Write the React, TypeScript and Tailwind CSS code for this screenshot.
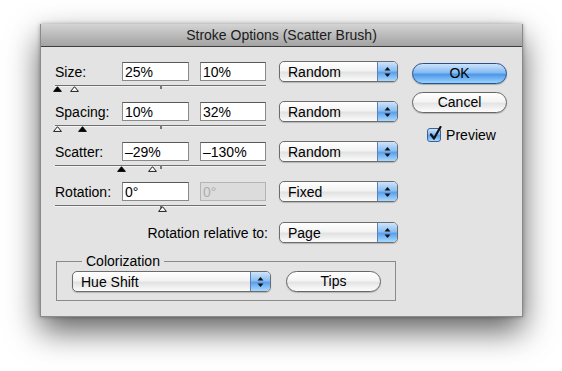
import React from "react";

const FONT = { fontFamily: '"Liberation Sans", Arial, sans-serif' };

function Arrows() {
  return (
    <svg width="7" height="12" viewBox="0 0 7 12">
      <path d="M3.5 1 L6.5 4.5 L0.5 4.5 Z" fill="#111" />
      <path d="M3.5 11 L6.5 7.5 L0.5 7.5 Z" fill="#111" />
    </svg>
  );
}

function PopUp({ label, wide }: { label: string; wide?: boolean }) {
  return (
    <div
      className={`flex h-[21px] shrink-0 overflow-hidden rounded-[5px] border border-[#6c6c6c] bg-[linear-gradient(to_bottom,#ffffff_0%,#f3f3f3_45%,#e2e2e2_55%,#fbfbfb_100%)] shadow-[0_1px_1px_rgba(0,0,0,0.2)] ${
        wide ? "w-[199px]" : "w-[119px]"
      }`}
    >
      <div className="flex flex-1 items-center pl-[8px] text-[14px] leading-none text-black">{label}</div>
      <div className="flex w-[20px] items-center justify-center border-l border-[#5d7fb3] bg-[linear-gradient(to_bottom,#cfe4fb_0%,#8cbff3_45%,#5aa0ec_55%,#a8dafe_100%)]">
        <Arrows />
      </div>
    </div>
  );
}

function Field({ value, w, disabled }: { value: string; w: string; disabled?: boolean }) {
  return (
    <div
      className={`flex h-[19px] shrink-0 items-center border pl-[2px] text-[14px] leading-none ${w} ${
        disabled
          ? "border-[#b4b4b4] bg-[#dcdcdc] text-[#b0b0b0]"
          : "border-[#8a8a8a] border-t-[#5a5a5a] bg-white text-black"
      }`}
    >
      {value}
    </div>
  );
}

function Thumb({ at, filled }: { at: number; filled: boolean }) {
  return (
    <svg
      className="absolute top-[1px]"
      style={{ left: at - 4.5 }}
      width="9"
      height="6"
      viewBox="0 0 9 6"
    >
      <path
        d="M4.5 0.7 L8.4 5.4 L0.6 5.4 Z"
        fill={filled ? "#000" : "#fff"}
        stroke="#000"
        strokeWidth="0.9"
      />
    </svg>
  );
}

function Slider({ thumbs }: { thumbs: { at: number; filled: boolean }[] }) {
  return (
    <div className="relative mt-[4px] h-[8px] w-[211px]">
      <div className="h-px w-full bg-[#6f6f6f]" />
      <div className="h-px w-full bg-[#f4f4f4]" />
      <div className="absolute left-[105px] top-0 h-[4px] w-[2px] bg-[#777]" />
      {thumbs.map((t, i) => (
        <Thumb key={i} at={t.at} filled={t.filled} />
      ))}
    </div>
  );
}

function Row({
  label,
  a,
  b,
  disabledB,
  pop,
  thumbs,
}: {
  label: string;
  a: string;
  b: string;
  disabledB?: boolean;
  pop: string;
  thumbs: { at: number; filled: boolean }[];
}) {
  return (
    <div className="flex h-[40px] items-start gap-[13px]">
      <div className="flex w-[211px] flex-col">
        <div className="flex h-[19px] items-center">
          <div className="w-[67px] text-[14px] leading-none text-black">{label}</div>
          <Field value={a} w="w-[67px]" />
          <div className="w-[11px]" />
          <Field value={b} w="w-[66px]" disabled={disabledB} />
        </div>
        <Slider thumbs={thumbs} />
      </div>
      <div className="-mt-px">
        <PopUp label={pop} />
      </div>
    </div>
  );
}

export default function App() {
  return (
    <div className="h-[371px] w-[562px] overflow-hidden bg-white pl-[40px] pt-[24px]" style={FONT}>
      <div className="w-[483px] border-x border-b border-[#8a8a8a] bg-[#e3e3e3] shadow-[0_14px_30px_rgba(0,0,0,0.62),0_0_4px_rgba(0,0,0,0.3)]">
        <div className="flex h-[23px] items-center justify-center border-b border-[#3e3e3e] bg-[linear-gradient(to_bottom,#d4d4d4_0%,#bbbbbb_50%,#a3a3a3_100%)] text-[14px] text-[#1b1b1b]">
          Stroke Options (Scatter Brush)
        </div>
        <div className="flex pb-[15px] pl-[14px] pr-[15px] pt-[15px]">
          <div className="flex w-[343px] flex-col">
            <Row
              label="Size:"
              a="25%"
              b="10%"
              pop="Random"
              thumbs={[
                { at: 2.5, filled: true },
                { at: 19.5, filled: false },
              ]}
            />
            <Row
              label="Spacing:"
              a="10%"
              b="32%"
              pop="Random"
              thumbs={[
                { at: 2, filled: false },
                { at: 27.5, filled: true },
              ]}
            />
            <Row
              label="Scatter:"
              a="–29%"
              b="–130%"
              pop="Random"
              thumbs={[
                { at: 66, filled: true },
                { at: 97.5, filled: false },
              ]}
            />
            <Row
              label="Rotation:"
              a="0°"
              b="0°"
              disabledB
              pop="Fixed"
              thumbs={[{ at: 107, filled: false }]}
            />
            <div className="flex h-[21px] items-center">
              <div className="flex-1 pr-[11px] text-right text-[14px] leading-none text-black">
                Rotation relative to:
              </div>
              <PopUp label="Page" />
            </div>
            <fieldset className="ml-px mt-[10px] w-[340px] border border-[#8a8a8a] pb-[8px] pl-[15px] pr-[14px] pt-[2px]">
              <legend className="ml-[10px] px-[4px] text-[14px] leading-[16px] text-black">Colorization</legend>
              <div className="flex items-center gap-[15px]">
                <PopUp label="Hue Shift" wide />
                <div className="flex h-[21px] w-[95px] items-center justify-center rounded-full border border-[#666] bg-[linear-gradient(to_bottom,#ffffff_0%,#f4f4f4_45%,#e4e4e4_55%,#fdfdfd_100%)] text-[14px] text-black shadow-[0_1px_1px_rgba(0,0,0,0.2)]">
                  Tips
                </div>
              </div>
            </fieldset>
          </div>
          <div className="ml-[14px] flex w-[95px] flex-col items-center">
            <div className="mt-px flex h-[21px] w-[95px] items-center justify-center rounded-full border border-[#2c4f8a] bg-[linear-gradient(to_bottom,#cde3fb_0%,#86bbf2_45%,#4f98e9_55%,#95d3ff_100%)] text-[14px] text-black shadow-[0_1px_1px_rgba(0,0,0,0.25)]">
              OK
            </div>
            <div className="mt-[8px] flex h-[21px] w-[95px] items-center justify-center rounded-full border border-[#666] bg-[linear-gradient(to_bottom,#ffffff_0%,#f4f4f4_45%,#e4e4e4_55%,#fdfdfd_100%)] text-[14px] text-black shadow-[0_1px_1px_rgba(0,0,0,0.2)]">
              Cancel
            </div>
            <div className="mt-[15px] flex items-center gap-[5px] pl-[4px]">
              <div className="relative h-[14px] w-[14px] rounded-[3px] border border-[#3d5f94] bg-[linear-gradient(to_bottom,#cfe4fb_0%,#86bbf2_45%,#5aa0ec_55%,#a8dafe_100%)]">
                <svg className="absolute -top-[3px] left-[1px]" width="13" height="15" viewBox="0 0 13 15">
                  <path d="M2 8.5 L5 12.5 L11.5 1" fill="none" stroke="#111" strokeWidth="2.2" strokeLinecap="round" strokeLinejoin="round" />
                </svg>
              </div>
              <span className="text-[14px] leading-none text-black">Preview</span>
            </div>
          </div>
        </div>
      </div>
    </div>
  );
}
